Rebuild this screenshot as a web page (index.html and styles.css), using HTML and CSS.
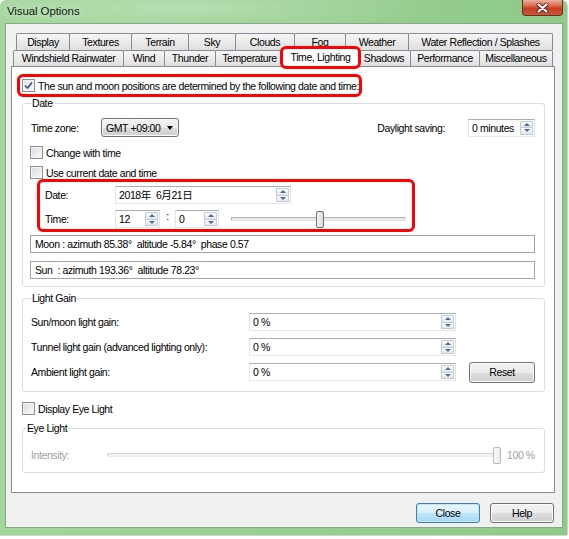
FILE: index.html
```html
<!DOCTYPE html>
<html>
<head>
<meta charset="utf-8">
<title>Visual Options</title>
<link rel="stylesheet" href="styles.css">
</head>
<body>
<div class="window">
  <div class="titlebar">
    <span class="title">Visual Options</span>
    <div class="xbtn">
      <svg width="13" height="10" viewBox="0 0 13 10"><path d="M2.5 1.5 L10.5 8.5 M10.5 1.5 L2.5 8.5" stroke="#5a1f12" stroke-width="4" stroke-linecap="round"/><path d="M2.5 1.5 L10.5 8.5 M10.5 1.5 L2.5 8.5" stroke="#fff" stroke-width="2.2" stroke-linecap="round"/></svg>
    </div>
  </div>
  <div class="client">
    <div class="tabs">
      <div class="tabrow row1">
        <div class="tab t-display">Display</div>
        <div class="tab t-textures">Textures</div>
        <div class="tab t-terrain">Terrain</div>
        <div class="tab t-sky">Sky</div>
        <div class="tab t-clouds">Clouds</div>
        <div class="tab t-fog">Fog</div>
        <div class="tab t-weather">Weather</div>
        <div class="tab t-water">Water Reflection / Splashes</div>
      </div>
      <div class="tabrow row2">
        <div class="tab t-wind-rain">Windshield Rainwater</div>
        <div class="tab t-wind">Wind</div>
        <div class="tab t-thunder">Thunder</div>
        <div class="tab t-temp">Temperature</div>
        <div class="tab t-time selected">Time, Lighting</div>
        <div class="tab t-shadows">Shadows</div>
        <div class="tab t-perf">Performance</div>
        <div class="tab t-misc">Miscellaneous</div>
      </div>
    </div>
    <div class="panel">
      <div class="hl hl-main">
        <span class="cb checked"><svg width="11" height="11" viewBox="0 0 11 11"><path d="M2 5.5 L4.5 8 L9 2.5" fill="none" stroke="#3d528a" stroke-width="1.7"/></svg></span>
        <span>The sun and moon positions are determined by the following date and time:</span>
      </div>
      <fieldset class="group date-group">
        <legend>Date</legend>
        <div class="row tz-row">
          <span class="lbl-tz">Time zone:</span>
          <div class="combo"><span>GMT +09:00</span><span class="arrow"></span></div>
          <span class="dst-lbl">Daylight saving:</span>
          <div class="spin w-dst"><span class="val">0 minutes</span><span class="spinbtn"><span class="up"></span><span class="dn"></span></span></div>
        </div>
        <div class="cbrow first"><span class="cb"></span><span>Change with time</span></div>
        <div class="cbrow"><span class="cb"></span><span>Use current date and time</span></div>
        <div class="hl hl-date">
          <div class="row dt-row">
            <span class="dt-lbl">Date:</span>
            <div class="spin w-date"><span class="val">2018年&nbsp; 6月21日</span><span class="spinbtn"><span class="up"></span><span class="dn"></span></span></div>
          </div>
          <div class="row dt-row time-row">
            <span class="dt-lbl">Time:</span>
            <div class="spin w-hr"><span class="val">12</span><span class="spinbtn"><span class="up"></span><span class="dn"></span></span></div>
            <span class="colon">:</span>
            <div class="spin w-min"><span class="val">0</span><span class="spinbtn"><span class="up"></span><span class="dn"></span></span></div>
            <div class="slider s-time"><div class="track"></div><div class="thumb" style="left:85px"></div></div>
          </div>
        </div>
        <div class="readout moon">Moon : azimuth 85.38°  altitude -5.84°  phase 0.57</div>
        <div class="readout sun">Sun  : azimuth 193.36°  altitude 78.23°</div>
      </fieldset>
      <fieldset class="group gain-group">
        <legend>Light Gain</legend>
        <div class="row gain-row first">
          <span class="gain-lbl">Sun/moon light gain:</span>
          <div class="spin w-gain"><span class="val">0 %</span><span class="spinbtn"><span class="up"></span><span class="dn"></span></span></div>
        </div>
        <div class="row gain-row">
          <span class="gain-lbl">Tunnel light gain (advanced lighting only):</span>
          <div class="spin w-gain"><span class="val">0 %</span><span class="spinbtn"><span class="up"></span><span class="dn"></span></span></div>
        </div>
        <div class="row gain-row">
          <span class="gain-lbl">Ambient light gain:</span>
          <div class="spin w-gain"><span class="val">0 %</span><span class="spinbtn"><span class="up"></span><span class="dn"></span></span></div>
          <div class="btn reset">Reset</div>
        </div>
      </fieldset>
      <div class="cbrow eye-cb"><span class="cb"></span><span>Display Eye Light</span></div>
      <fieldset class="group eye-group">
        <legend>Eye Light</legend>
        <div class="row eye-row">
          <span class="int-lbl">Intensity:</span>
          <div class="slider s-eye"><div class="track"></div><div class="thumb" style="left:386px"></div></div>
          <span class="pct">100 %</span>
        </div>
      </fieldset>
    </div>
    <div class="buttons">
      <div class="btn default">Close</div>
      <div class="btn">Help</div>
    </div>
  </div>
</div>
</body>
</html>
```

FILE: styles.css
```css
* { box-sizing: border-box; }
html, body { margin: 0; padding: 0; background: #ffffff; }
body {
  width: 569px;
  height: 539px;
  overflow: hidden;
  font-family: "Liberation Sans", "Noto Sans CJK JP", sans-serif;
  font-size: 10.5px;
  letter-spacing: -0.4px;
  color: #000;
  white-space: nowrap;
}

.window {
  width: 567px;
  height: 535px;
  border-radius: 6px 6px 0 0;
  background:
    radial-gradient(ellipse 260px 26px at 190px 8px, rgba(255,255,255,0.28), rgba(255,255,255,0) 100%),
    linear-gradient(90deg, #a3d69c 0%, #98cf91 45%, #8fca88 100%);
  box-shadow: 0 1px 0 #c9d9c9, 1px 0 0 #c9d9c9;
}

.titlebar {
  height: 23px;
  display: flex;
  align-items: flex-start;
  padding-left: 7px;
}
.title {
  font-family: "Liberation Sans", sans-serif;
  font-size: 11.5px;
  letter-spacing: -0.1px;
  line-height: 22px;
  color: #101c10;
  text-shadow: 0 0 6px rgba(255,255,255,0.7);
}
.xbtn {
  margin-left: auto;
  margin-right: 4px;
  width: 41px;
  height: 16px;
  border: 1px solid #6b2b1e;
  border-top: none;
  border-radius: 0 0 4px 4px;
  background: linear-gradient(#eab0a0 0%, #d9694d 40%, #c23c20 55%, #d1583a 100%);
  display: flex;
  align-items: center;
  justify-content: center;
}

.client {
  margin-left: 5px;
  width: 558px;
  height: 505px;
  background: #f0f0f0;
  border: 1px solid #86a886;
}

/* tabs */
.tabs { padding-top: 9px; }
.tabrow { display: flex; align-items: flex-start; }
.row1 { margin-left: 10px; height: 17px; }
.row2 { margin-left: 7px; height: 16px; }
.tab {
  flex: none;
  height: 17px;
  margin-left: -1px;
  border: 1px solid #898c95;
  border-bottom: none;
  border-radius: 2px 2px 0 0;
  background: linear-gradient(#f6f6f6, #ebebeb 50%, #dedede);
  text-align: center;
  line-height: 16px;
  overflow: hidden;
}
.tab:first-child { margin-left: 0; }
.row2 .tab { height: 16px; line-height: 15px; }

.t-display { width: 54px; }
.t-textures { width: 63px; }
.t-terrain { width: 58px; }
.t-sky { width: 48px; }
.t-clouds { width: 60px; }
.t-fog { width: 52px; }
.t-weather { width: 64px; }
.t-water { width: 145px; }
.t-wind-rain { width: 111px; }
.t-wind { width: 42px; }
.t-thunder { width: 52px; }
.t-temp { width: 69px; }
.t-time { width: 75px; }
.t-shadows { width: 54px; }
.t-perf { width: 70px; }
.t-misc { width: 74px; }

.row2 .tab.selected {
  position: relative;
  z-index: 2;
  width: 79px;
  height: 19px;
  margin: -2px -2px 0 -3px;
  background: #fff;
  line-height: 17px;
  overflow: visible;
}
.tab.selected::after {
  content: "";
  position: absolute;
  left: -2px; right: -2px; top: -3px; bottom: -2px;
  border: 3px solid #f00;
  border-radius: 6px;
}

/* panel */
.panel {
  position: relative;
  z-index: 1;
  margin-left: 5px;
  width: 544px;
  height: 427px;
  background: #fff;
  border: 1px solid #898c95;
}

.hl { border: 3px solid #f00; border-radius: 6px; }
.hl-main {
  margin: 7px 0 0 5px;
  width: 345px;
  height: 23px;
  display: flex;
  align-items: center;
  padding-left: 2px;
}

.cb {
  flex: none;
  width: 13px;
  height: 13px;
  margin-right: 3px;
  border: 1px solid #8e8f8f;
  background: linear-gradient(135deg, #d8dbe0 0%, #eceef0 60%, #fbfbfb 100%);
  box-shadow: inset 0 0 0 1px #f4f4f4;
  display: flex;
  align-items: center;
  justify-content: center;
}
.cb.checked { background: linear-gradient(135deg, #e2e5ea, #fafafa); }

.group {
  margin: 0 0 0 10px;
  width: 523px;
  min-width: 0;
  padding: 0 9px 7px 8px;
  border: 1px solid #d5dfe5;
  border-radius: 3px;
}
.group legend {
  padding: 0 1px;
  line-height: 12px;
}

.row { display: flex; align-items: center; }
.tz-row { margin-top: 9px; height: 19px; }
.lbl-tz { width: 70px; }
.combo {
  width: 78px;
  height: 19px;
  border: 1px solid #707070;
  border-radius: 3px;
  background: linear-gradient(#f2f2f2 0%, #ebebeb 50%, #dddddd 51%, #cfcfcf 100%);
  box-shadow: inset 0 0 0 1px #fbfbfb;
  display: flex;
  align-items: center;
  padding-left: 4px;
}
.combo .arrow {
  margin-left: auto;
  margin-right: 5px;
  width: 0; height: 0;
  border-left: 3.5px solid transparent;
  border-right: 3.5px solid transparent;
  border-top: 4px solid #000;
}
.dst-lbl { margin-left: auto; margin-right: 23px; }

.spin {
  height: 18px;
  background: #fff;
  border: 1px solid;
  border-color: #abadb3 #dbdfe6 #e3e9ef #e2e3ea;
  display: flex;
  align-items: center;
  padding: 1px 1px 1px 3px;
}
.spin .val { flex: 1; line-height: 14px; }
.spinbtn {
  flex: none;
  width: 13px;
  height: 14px;
  display: flex;
  flex-direction: column;
}
.spinbtn .up, .spinbtn .dn {
  flex: 1;
  border: 1px solid #c3c9d3;
  background: linear-gradient(#fafbfc, #e4e8ee);
  display: flex;
  align-items: center;
  justify-content: center;
}
.spinbtn .up { border-radius: 1px 1px 0 0; }
.spinbtn .dn { border-top: none; border-radius: 0 0 1px 1px; }
.spinbtn .up::after {
  content: "";
  border-left: 3px solid transparent;
  border-right: 3px solid transparent;
  border-bottom: 3px solid #4c6ca0;
}
.spinbtn .dn::after {
  content: "";
  border-left: 3px solid transparent;
  border-right: 3px solid transparent;
  border-top: 3px solid #4c6ca0;
}
.w-dst { width: 67px; }
.w-date { width: 176px; }
.w-hr { width: 45px; }
.w-min { width: 44px; }
.w-gain { width: 207px; }

.cbrow { display: flex; align-items: center; height: 13px; margin-top: 7px; margin-left: -1px; }
.cbrow.first { margin-top: 9px; }
.cbrow .cb { margin-right: 3px; }

.hl-date {
  margin-left: 6px;
  width: 378px;
  height: 53px;
  padding: 4px 0 0 5px;
}
.dt-row { height: 18px; }
.time-row { margin-top: 6px; }
.dt-lbl { width: 70px; }
.colon {
  width: 15px;
  text-align: center;
  align-self: flex-start;
  line-height: 12px;
}
.slider { position: relative; height: 18px; }
.slider .track {
  position: absolute;
  left: 0; right: 0;
  top: 7px;
  height: 4px;
  border: 1px solid;
  border-color: #b0b0b0 #e3e3e3 #e3e3e3 #b0b0b0;
  background: #e7eaea;
  border-radius: 1px;
}
.slider .thumb {
  position: absolute;
  top: 1px;
  width: 8px;
  height: 17px;
  border: 1px solid #707070;
  border-radius: 2px;
  background: linear-gradient(90deg, #f4f4f4, #dadada);
}
.s-time { width: 175px; margin-left: 12px; }

.readout {
  margin-left: -1px;
  width: 505px;
  height: 18px;
  border: 1px solid #a3a3a3;
  padding-left: 4px;
  line-height: 16px;
  white-space: pre;
}
.moon { margin-top: 3px; }
.sun { margin-top: 8px; }

.gain-group { margin-top: 5px; padding-bottom: 10px; }
.gain-row { height: 18px; margin-top: 7px; }
.gain-row.first { margin-top: 9px; }
.gain-lbl { width: 218px; }
.reset { margin-left: 13px; width: 66px; height: 21px; }

.btn {
  border: 1px solid #707070;
  border-radius: 3px;
  background: linear-gradient(#f2f2f2 0%, #ebebeb 50%, #dddddd 51%, #cfcfcf 100%);
  box-shadow: inset 0 0 0 1px #fcfcfc;
  display: flex;
  align-items: center;
  justify-content: center;
}
.btn.default {
  border-color: #3c7fb1;
  background: linear-gradient(#eaf6fd 0%, #d9f0fc 50%, #bee6fd 51%, #a7d9f5 100%);
  box-shadow: inset 0 0 0 1px #bfe6fb;
}

.eye-cb { margin-left: 10px; margin-top: 10px; }
.eye-group { margin-top: 7px; padding-bottom: 8px; }
.eye-group legend { margin-left: -5px; }
.eye-row { margin-top: 12px; height: 18px; color: #a0a0a0; }
.int-lbl { width: 76px; }
.s-eye { width: 393px; }
.s-eye .track { border-color: #d4d4d4 #ececec #ececec #d4d4d4; background: #f2f2f2; }
.s-eye .thumb { border-color: #b8b8b8; background: linear-gradient(90deg, #fbfbfb, #ececec); }
.pct { margin-left: 7px; }

.buttons {
  display: flex;
  justify-content: flex-end;
  gap: 10px;
  padding-right: 8px;
  margin-top: 10px;
}
.buttons .btn { width: 64px; height: 20px; }
```
